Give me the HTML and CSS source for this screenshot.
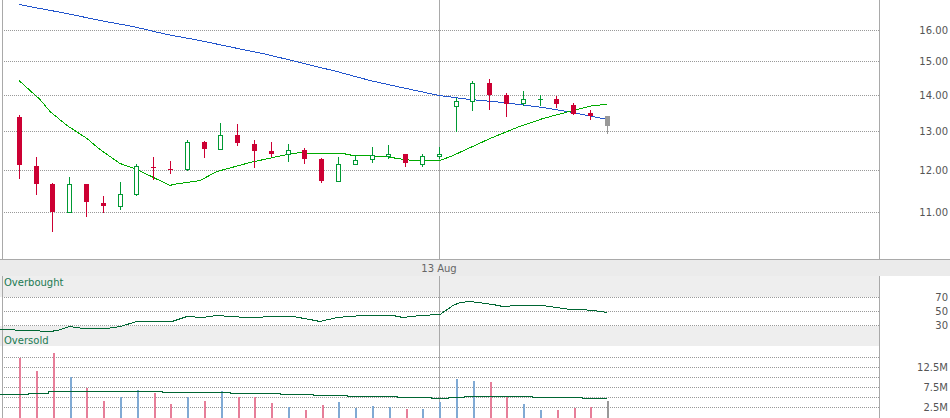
FILE: index.html
```html
<!DOCTYPE html>
<html lang="en">

<head>
    <meta charset="UTF-8">
    <meta name="viewport" content="width=device-width, initial-scale=1.0">
    <title>Stock Chart</title>
    <link rel="stylesheet" href="styles.css">
</head>

<body>
    <div class="chart">
        <svg class="panel price-panel" id="pricePanel" width="950" height="259">
            <defs>
                <pattern id="dotsPrice" width="2" height="1" patternUnits="userSpaceOnUse">
                    <rect class="grid-dot" width="1" height="1"></rect>
                </pattern>
            </defs>
        </svg>
        <div class="date-bar">
            <span class="date-label">13 Aug</span>
        </div>
        <svg class="panel lower-panel" id="lowerPanel" width="950" height="142">
            <defs>
                <pattern id="dotsLower" width="2" height="1" patternUnits="userSpaceOnUse">
                    <rect class="grid-dot" width="1" height="1"></rect>
                </pattern>
            </defs>
        </svg>
    </div>

    <script src="chart.js"></script>
</body>

</html>
```
FILE: styles.css
```css
body {
    margin: 0;
    background: #ffffff;
    overflow: hidden;
    font-family: "DejaVu Sans", sans-serif;
    font-size: 10px;
}

.chart {
    display: flex;
    flex-direction: column;
    width: 950px;
    height: 418px;
}

.panel {
    display: block;
    shape-rendering: crispEdges;
}

.price-panel {
    height: 259px;
}

.lower-panel {
    height: 142px;
}

.date-bar {
    display: flex;
    justify-content: center;
    align-items: center;
    width: 878px;
    height: 16px;
    padding-right: 72px;
    background: #ebebeb;
    border-top: 1px solid #a9a9a9;
    color: #666666;
}

.axis-line {
    stroke: #a9a9a9;
    stroke-width: 1;
}

.grid-dot {
    fill: #999999;
}

.price-grid {
    fill: url(#dotsPrice);
}

.lower-grid {
    fill: url(#dotsLower);
}

.band {
    fill: #eeeeee;
}

.axis-text {
    fill: #555555;
    font-size: 10px;
    text-anchor: end;
    dominant-baseline: central;
}

.band-text {
    fill: #1a7a52;
    font-size: 10px;
    dominant-baseline: central;
}

.trace {
    fill: none;
    stroke-width: 1;
}

.trace-blue {
    stroke: #2255cc;
}

.trace-green {
    stroke: #00aa00;
}

.trace-dark {
    stroke: #006633;
}

.candle-down {
    fill: #cc0033;
}

.candle-up {
    fill: #009933;
}

.candle-hollow {
    fill: #ffffff;
    stroke: #009933;
    stroke-width: 1;
}

.candle-none {
    fill: #999999;
}

.vol-down {
    fill: #e67e99;
}

.vol-up {
    fill: #80aad4;
}

.vol-none {
    fill: #999999;
}
```
FILE: chart.js
```js
const SVG_NS = 'http://www.w3.org/2000/svg';
const priceSvg = document.getElementById('pricePanel');
const lowerSvg = document.getElementById('lowerPanel');
const LOWER_TOP = 276;

// x, high, low, bodyTop, bodyBottom, kind
const candles = [
    [19, 115, 179, 117, 165, 'down'],
    [36, 157, 195, 166, 184, 'down'],
    [52, 183, 232, 184, 212, 'down'],
    [69, 177, 213, 184, 213, 'up'],
    [86, 184, 217, 184, 202, 'down'],
    [103, 196, 213, 203, 206, 'down'],
    [120, 182, 210, 194, 207, 'up'],
    [136, 164, 196, 166, 195, 'up'],
    [153, 157, 180, 167, 168, 'down'],
    [170, 161, 174, 169, 170, 'down'],
    [187, 140, 171, 142, 170, 'up'],
    [204, 141, 158, 142, 149, 'down'],
    [220, 123, 150, 135, 150, 'up'],
    [237, 124, 146, 135, 143, 'down'],
    [254, 140, 168, 144, 151, 'down'],
    [271, 142, 157, 151, 154, 'down'],
    [288, 144, 162, 150, 155, 'up'],
    [304, 148, 164, 150, 159, 'down'],
    [321, 158, 183, 159, 181, 'down'],
    [338, 157, 182, 164, 182, 'up'],
    [355, 155, 165, 160, 165, 'up'],
    [372, 147, 163, 155, 160, 'up'],
    [388, 145, 159, 154, 157, 'up'],
    [405, 154, 167, 154, 163, 'down'],
    [422, 154, 167, 156, 165, 'up'],
    [439, 147, 159, 154, 157, 'up'],
    [456, 98, 132, 101, 107, 'up'],
    [472, 81, 111, 83, 102, 'up'],
    [489, 79, 110, 83, 95, 'down'],
    [506, 93, 117, 95, 104, 'down'],
    [523, 91, 106, 99, 104, 'up'],
    [540, 95, 106, 99, 100, 'doji'],
    [556, 96, 108, 99, 104, 'down'],
    [573, 103, 115, 105, 114, 'down'],
    [590, 110, 120, 113, 116, 'down'],
    [607, 116, 134, 116, 126, 'none']
];

// x, top, kind
const volumes = [
    [19, 358, 'down'], [36, 371, 'down'], [53, 353, 'down'], [70, 377, 'up'],
    [86, 388, 'down'], [103, 401, 'down'], [120, 397, 'up'], [137, 390, 'up'],
    [154, 393, 'down'], [170, 404, 'down'], [187, 397, 'up'], [204, 401, 'down'],
    [221, 391, 'up'], [238, 397, 'down'], [254, 397, 'down'], [271, 403, 'down'],
    [288, 407, 'up'], [305, 410, 'down'], [322, 405, 'down'], [338, 402, 'up'],
    [355, 408, 'up'], [372, 406, 'up'], [389, 407, 'up'], [406, 409, 'down'],
    [422, 409, 'up'], [439, 402, 'up'], [456, 379, 'up'], [473, 381, 'up'],
    [490, 382, 'down'], [506, 397, 'down'], [523, 404, 'up'], [540, 410, 'up'],
    [557, 410, 'down'], [574, 408, 'down'], [590, 407, 'down'], [607, 401, 'none']
];

const blueLine = [[19, 4], [40, 8], [67, 13], [100, 20], [133, 26], [167, 34], [200, 40], [233, 47],
    [267, 54], [300, 62], [320, 67], [333, 70], [370, 80], [397, 86], [439, 95], [470, 99],
    [503, 102], [543, 107], [573, 112], [607, 119]];

const greenLine = [[19, 80], [30, 90], [40, 99], [50, 111], [67, 125], [87, 138], [100, 149], [120, 163],
    [137, 169], [170, 185], [173, 184], [200, 180], [217, 171], [250, 162], [287, 154], [300, 152],
    [313, 153], [343, 153], [353, 155], [387, 156], [397, 158], [413, 160], [440, 160], [453, 155],
    [477, 144], [490, 138], [517, 127], [543, 118], [573, 110], [593, 105], [607, 104]];

const oscLine = [[0, 329], [30, 330], [50, 331], [57, 330], [70, 326], [83, 328], [107, 328], [120, 326],
    [137, 321], [172, 321], [187, 316], [203, 317], [217, 315], [230, 316], [247, 317], [280, 316],
    [293, 316], [310, 319], [320, 321], [337, 317], [363, 315], [393, 315], [403, 317], [420, 315],
    [440, 314], [453, 305], [460, 302], [470, 301], [493, 304], [503, 306], [517, 305], [543, 305],
    [570, 309], [580, 309], [593, 310], [607, 312]];

const volAvgLine = [[0, 394], [28, 394], [28, 393], [48, 393], [48, 391], [162, 391], [162, 392], [230, 392],
    [230, 393], [280, 393], [280, 394], [313, 394], [313, 395], [347, 395], [347, 396], [397, 396],
    [397, 397], [431, 397], [431, 398], [448, 398], [448, 397], [464, 397], [464, 396], [532, 396],
    [532, 397], [582, 397], [582, 398], [607, 398]];

function add(svg, tag, attrs, text) {
    const el = document.createElementNS(SVG_NS, tag);
    Object.keys(attrs).forEach(key => el.setAttribute(key, attrs[key]));
    if (text) el.textContent = text;
    svg.appendChild(el);
    return el;
}

function gridLine(svg, y, name) {
    add(svg, 'rect', { class: name, x: 4, y: y, width: 875, height: 1 });
}

function axisLines(svg, height) {
    [2, 439, 879].forEach(x => {
        add(svg, 'line', { class: 'axis-line', x1: x + 0.5, x2: x + 0.5, y1: 0, y2: height });
    });
}

function trace(svg, points, name, offset) {
    const pts = points.map(p => `${p[0]},${p[1] - offset + 0.5}`).join(' ');
    add(svg, 'polyline', { class: `trace ${name}`, points: pts });
}

function drawCandle(c) {
    const [x, high, low, top, bottom, kind] = c;
    const wickClass = kind === 'up' || kind === 'doji' ? 'candle-up' : `candle-${kind}`;
    add(priceSvg, 'rect', { class: wickClass, x: x, y: high, width: 1, height: low - high });
    if (kind === 'up') {
        add(priceSvg, 'rect', { class: 'candle-hollow', x: x - 1.5, y: top + 0.5, width: 4, height: bottom - top - 1 });
    } else {
        add(priceSvg, 'rect', { class: wickClass, x: x - 2, y: top, width: 5, height: bottom - top });
    }
}

// price panel
[30, 61, 95, 131, 170, 212].forEach(y => gridLine(priceSvg, y, 'price-grid'));
axisLines(priceSvg, 259);
trace(priceSvg, blueLine, 'trace-blue', 0);
trace(priceSvg, greenLine, 'trace-green', 0);
candles.forEach(drawCandle);
[[30, '16.00'], [61, '15.00'], [95, '14.00'], [131, '13.00'], [170, '12.00'], [212, '11.00']].forEach(l => {
    add(priceSvg, 'text', { class: 'axis-text', x: 948, y: l[0] + 0.5 }, l[1]);
});

// oscillator and volume share the lower panel, y values are page coordinates
add(lowerSvg, 'rect', { class: 'band', x: 0, y: 0, width: 879, height: 21 });
add(lowerSvg, 'rect', { class: 'band', x: 0, y: 326 - LOWER_TOP, width: 879, height: 20 });
[297, 311, 325, 357, 367, 377, 387, 397, 407].forEach(y => gridLine(lowerSvg, y - LOWER_TOP, 'lower-grid'));
axisLines(lowerSvg, 142);
add(lowerSvg, 'text', { class: 'band-text', x: 4, y: 282.5 - LOWER_TOP }, 'Overbought');
add(lowerSvg, 'text', { class: 'band-text', x: 4, y: 340.5 - LOWER_TOP }, 'Oversold');
trace(lowerSvg, oscLine, 'trace-dark', LOWER_TOP);
volumes.forEach(v => {
    add(lowerSvg, 'rect', { class: `vol-${v[2]}`, x: v[0], y: v[1] - LOWER_TOP, width: 2, height: 418 - v[1] });
});
trace(lowerSvg, volAvgLine, 'trace-dark', LOWER_TOP);
[[297, '70'], [311, '50'], [325, '30'], [367, '12.5M'], [387, '7.5M'], [407, '2.5M']].forEach(l => {
    add(lowerSvg, 'text', { class: 'axis-text', x: 948, y: l[0] - LOWER_TOP + 0.5 }, l[1]);
});
```
